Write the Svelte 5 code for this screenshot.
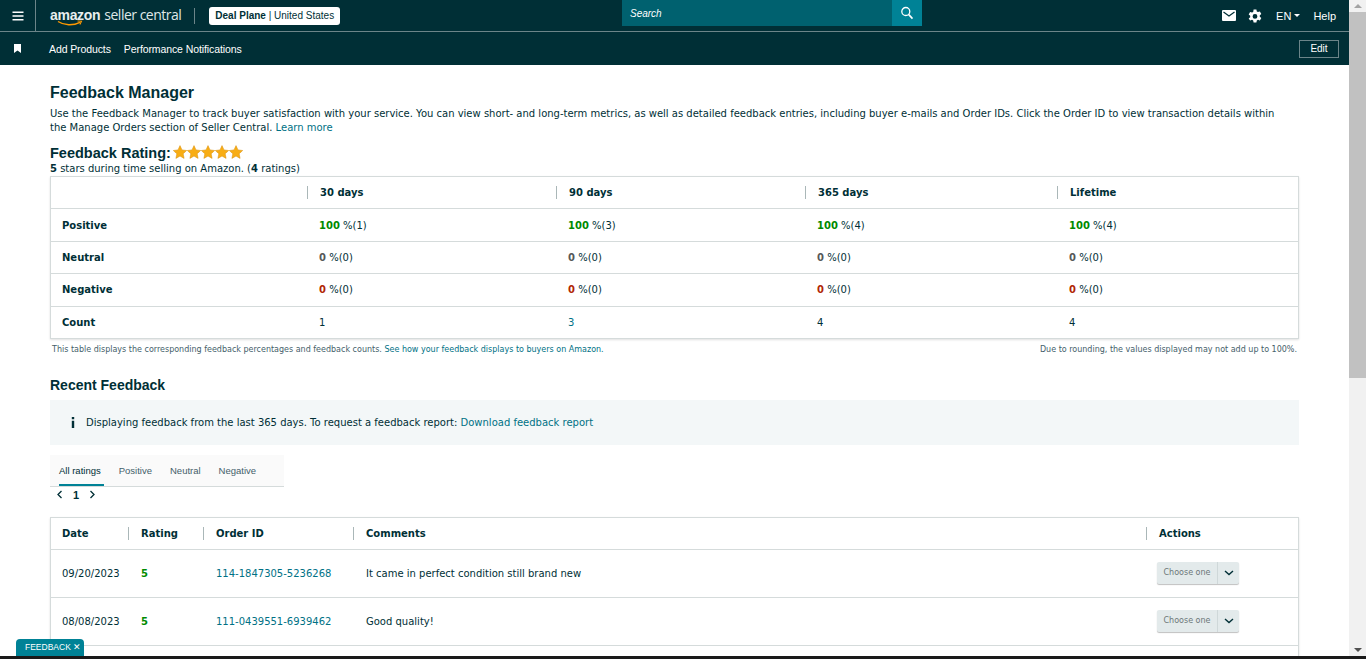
<script lang="ts">
    const summaryRows = [
        { label: "Positive", tone: "good", value: "100", counts: ["1", "3", "4", "4"] },
        { label: "Neutral", tone: "flat", value: "0", counts: ["0", "0", "0", "0"] },
        { label: "Negative", tone: "bad", value: "0", counts: ["0", "0", "0", "0"] },
    ];
    const periods = ["30 days", "90 days", "365 days", "Lifetime"];
    const totals = ["1", "3", "4", "4"];
    const tabs = ["All ratings", "Positive", "Neutral", "Negative"];
    const feedback = [
        { date: "09/20/2023", rating: 5, order: "114-1847305-5236268", comment: "It came in perfect condition still brand new" },
        { date: "08/08/2023", rating: 5, order: "111-0439551-6939462", comment: "Good quality!" },
        { date: "", rating: "", order: "", comment: "" },
    ];
</script>

<div class="screen">
    <div class="viewport">
        <div class="page">
            <header class="topbar">
                <div class="row-one">
                    <button class="burger" aria-label="Menu">
                        <svg width="14" height="10" viewBox="0 0 14 10"><path d="M1.5 1.2h11M1.5 5h11M1.5 8.8h11" stroke="#fff" stroke-width="1.4" /></svg>
                    </button>
                    <div class="brand">
                        <span class="amazon">amazon<svg class="smile" width="26" height="7" viewBox="0 0 26 7"><path d="M1 1.5c6 4 15 4.400 22 .8" fill="none" stroke="#f90" stroke-width="1.3" /><path d="M20.500 1l4 .2-1.600 3.300" fill="none" stroke="#f90" stroke-width="1.100" /></svg></span>
                        <span class="seller">seller central</span>
                    </div>
                    <span class="divider"></span>
                    <div class="account"><b>Deal Plane</b> <i>|</i> United States</div>
                    <div class="search">
                        <span class="search-text">Search</span>
                        <button class="search-btn" aria-label="Search">
                            <svg width="14" height="14" viewBox="0 0 14 14"><circle cx="5.800" cy="5.500" r="4" fill="none" stroke="#fff" stroke-width="1.300" /><path d="M8.800 8.600l3.700 4" stroke="#fff" stroke-width="1.600" /></svg>
                        </button>
                    </div>
                    <div class="tools">
                        <svg width="14" height="11" viewBox="0 0 14 11"><rect width="14" height="11" rx="1" fill="#fff" /><path d="M1.500 2l5.500 4 5.500-4" fill="none" stroke="#002f36" stroke-width="1.200" /></svg>
                        <svg class="gear" width="14" height="14" viewBox="0 0 14 14"><path fill="#fff" fill-rule="evenodd" d="M5.600.5h2.800l.4 1.900 1.200.7 1.900-.6 1.400 2.400-1.500 1.300v1.500l1.500 1.300-1.400 2.400-1.900-.6-1.200.7-.4 1.900H5.600l-.4-1.900-1.200-.7-1.900.6L.7 9.500l1.500-1.300V6.700L.7 5.400l1.400-2.400 1.900.6 1.200-.7zM7 5a2.400 2.400 0 1 0 0 4.800A2.400 2.400 0 0 0 7 5z" /></svg>
                        <span class="lang">EN<span class="caret"></span></span>
                        <span class="help">Help</span>
                    </div>
                </div>
                <div class="row-two">
                    <svg class="bookmark" width="7" height="9" viewBox="0 0 7 9"><path d="M0 0h7v9L3.500 6.500 0 9z" fill="#fff" /></svg>
                    <a href="#add">Add Products</a>
                    <a href="#perf">Performance Notifications</a>
                    <button class="edit">Edit</button>
                </div>
            </header>

            <main class="content">
                <h1>Feedback Manager</h1>
                <p class="intro">
                    Use the Feedback Manager to track buyer satisfaction with your service. You can view short- and long-term metrics, as well as detailed feedback entries, including buyer e-mails and Order IDs. Click the Order ID to view transaction details within the Manage Orders section of Seller Central. <a href="#more">Learn more</a>
                </p>

                <div class="rating-head">
                    <h2>Feedback Rating:</h2>
                    <div class="stars">
                        {#each [0, 1, 2, 3, 4] as s (s)}
                            <svg width="14" height="14" viewBox="0 0 14 14"><path d="M7 .6l2 4.300 4.700.6-3.500 3.200.9 4.700L7 11.100l-4.100 2.300.9-4.700L.3 5.500 5 4.900z" fill="#f8ad14" stroke="#d98f0a" stroke-width=".5" /></svg>
                        {/each}
                    </div>
                </div>
                <p class="sub"><b>5</b> stars during time selling on Amazon. (<b>4</b> ratings)</p>

                <table class="card summary">
                    <thead>
                        <tr>
                            <th class="first"></th>
                            {#each periods as p (p)}
                                <th><span class="sep">{p}</span></th>
                            {/each}
                        </tr>
                    </thead>
                    <tbody>
                        {#each summaryRows as row (row.label)}
                            <tr>
                                <th class="first">{row.label}</th>
                                {#each row.counts as c, i (i)}
                                    <td><b class={row.tone}>{row.value}</b> %({c})</td>
                                {/each}
                            </tr>
                        {/each}
                        <tr>
                            <th class="first">Count</th>
                            {#each totals as t, i (i)}
                                <td class:link={i === 1}>{t}</td>
                            {/each}
                        </tr>
                    </tbody>
                </table>
                <div class="notes">
                    <span>This table displays the corresponding feedback percentages and feedback counts. <a href="#see">See how your feedback displays to buyers on Amazon.</a></span>
                    <span>Due to rounding, the values displayed may not add up to 100%.</span>
                </div>

                <h2 class="recent">Recent Feedback</h2>
                <div class="banner">
                    <svg width="4" height="11" viewBox="0 0 4 11"><path d="M.8 0h2.400v2.300H.8zM.8 3.800h2.400V11H.8z" fill="#002f36" /></svg>
                    <span>Displaying feedback from the last 365 days. To request a feedback report: <a href="#dl">Download feedback report</a></span>
                </div>

                <div class="tabs">
                    {#each tabs as tab, i (tab)}
                        <span class="tab" class:active={i === 0}>{tab}</span>
                    {/each}
                </div>
                <div class="pager">
                    <svg width="7" height="9" viewBox="0 0 7 9"><path d="M5.500 1L2 4.500 5.500 8" fill="none" stroke="#002f36" stroke-width="1.300" /></svg>
                    <b>1</b>
                    <svg width="7" height="9" viewBox="0 0 7 9"><path d="M1.500 1L5 4.500 1.500 8" fill="none" stroke="#002f36" stroke-width="1.300" /></svg>
                </div>

                <table class="card list">
                    <thead>
                        <tr>
                            <th>Date</th>
                            <th><span class="sep">Rating</span></th>
                            <th><span class="sep">Order ID</span></th>
                            <th><span class="sep">Comments</span></th>
                            <th><span class="sep">Actions</span></th>
                        </tr>
                    </thead>
                    <tbody>
                        {#each feedback as f, i (i)}
                            <tr>
                                <td>{f.date}</td>
                                <td><b class="good">{f.rating}</b></td>
                                <td class="link">{f.order}</td>
                                <td>{f.comment}</td>
                                <td>
                                    <div class="choose">
                                        <span class="choose-label">Choose one</span>
                                        <span class="choose-arrow">
                                            <svg width="10" height="6" viewBox="0 0 10 6"><path d="M1 1l4 3.600L9 1" fill="none" stroke="#002f36" stroke-width="1.400" /></svg>
                                        </span>
                                    </div>
                                </td>
                            </tr>
                        {/each}
                    </tbody>
                </table>
            </main>
        </div>

        <div class="scrollbar" aria-hidden="true">
            <span class="arrow up"></span>
            <span class="thumb"></span>
            <span class="arrow down"></span>
        </div>

        <div class="feedback-tab">FEEDBACK <span>✕</span></div>
    </div>
    <div class="strip"></div>
</div>

<style>
    :global(body) {
        margin: 0;
        overflow: hidden;
        background: #fff;
    }

    .screen {
        height: 659px;
        display: flex;
        flex-direction: column;
        font-family: "DejaVu Sans", Verdana, sans-serif;
        font-size: 10px;
        color: #002f36;
    }

    .viewport {
        flex: 1;
        min-height: 0;
        display: flex;
        position: relative;
    }

    .page {
        flex: 1;
        min-width: 0;
        overflow: hidden;
    }

    a {
        color: #007185;
        text-decoration: none;
    }

    button {
        background: none;
        border: 0;
        padding: 0;
        color: inherit;
        font: inherit;
    }

    .topbar {
        background: #002f36;
        color: #fff;
        font-family: "Liberation Sans", Arial, sans-serif;
    }

    .row-one {
        height: 31px;
        display: flex;
        align-items: center;
        border-bottom: 1px solid #6c8589;
        position: relative;
    }

    .burger {
        width: 35px;
        height: 31px;
        display: flex;
        align-items: center;
        justify-content: center;
        border-right: 1px solid #6c8589;
        box-sizing: content-box;
    }

    .brand {
        margin-left: 14px;
        display: flex;
        align-items: flex-start;
        gap: 4px;
        height: 24px;
    }

    .amazon {
        font-size: 14px;
        font-weight: bold;
        letter-spacing: -0.3px;
        line-height: 22px;
        position: relative;
        color: #e8eeee;
    }

    .smile {
        position: absolute;
        left: 7px;
        top: 16px;
    }

    .seller {
        font-family: "Open Sans", sans-serif;
        font-size: 14px;
        letter-spacing: -0.5px;
        line-height: 22px;
        color: #dfe7e8;
    }

    .divider {
        width: 1px;
        height: 16px;
        background: #6c8589;
        margin-left: 13px;
    }

    .account {
        margin-left: 14px;
        background: #fff;
        color: #002f36;
        border-radius: 3px;
        font-size: 10px;
        line-height: 18px;
        height: 18px;
        padding: 0 6px;
        white-space: nowrap;
    }

    .account i {
        font-style: normal;
    }

    .search {
        position: absolute;
        left: 622px;
        top: 0;
        width: 300px;
        height: 26px;
        display: flex;
        background: #00616f;
        font-size: 10px;
    }

    .search-text {
        flex: 1;
        padding-left: 8px;
        line-height: 27px;
        font-style: italic;
    }

    .search-btn {
        width: 30px;
        height: 26px;
        background: #008296;
        display: flex;
        align-items: center;
        justify-content: center;
    }

    .tools {
        margin-left: auto;
        display: flex;
        align-items: center;
        padding-right: 13px;
        font-size: 11px;
    }

    .gear {
        margin-left: 12px;
    }

    .lang {
        margin-left: 14px;
        display: flex;
        align-items: center;
        gap: 3px;
    }

    .caret {
        width: 0;
        height: 0;
        border: 3px solid transparent;
        border-top: 3px solid #fff;
        border-bottom: 0;
    }

    .help {
        margin-left: 13px;
    }

    .row-two {
        height: 33px;
        display: flex;
        align-items: center;
        font-size: 10.5px;
        padding: 0 10px 0 14px;
    }

    .bookmark {
        margin-right: 28px;
        margin-top: -1px;
    }

    .row-two a {
        color: #fff;
        margin-right: 13px;
        letter-spacing: -0.1px;
    }

    .edit {
        margin-left: auto;
        width: 40px;
        height: 18px;
        border: 1px solid #6c8589;
        color: #fff;
        font-size: 10px;
        box-sizing: border-box;
    }

    .content {
        padding: 19px 50px 0;
    }

    h1, h2 {
        font-family: "Liberation Sans", Arial, sans-serif;
        font-weight: bold;
        margin: 0;
        color: #002f36;
    }

    h1 {
        font-size: 16px;
        line-height: 18px;
    }

    .intro {
        margin: 5px 0 0;
        line-height: 14px;
        width: 1240px;
    }

    .rating-head {
        display: flex;
        align-items: center;
        margin-top: 9px;
        height: 18px;
    }

    .rating-head h2 {
        font-size: 14.500px;
    }

    .stars {
        display: flex;
        margin-left: 2px;
        margin-top: -2px;
    }

    .sub {
        margin: 0;
        line-height: 13px;
    }

    .card {
        width: 1249px;
        border-collapse: collapse;
        table-layout: fixed;
        border: 1px solid #d5dbdb;
        box-shadow: 0 1px 2px rgba(0, 0, 0, 0.12);
    }

    .card th, .card td {
        border-top: 1px solid #d5dbdb;
        padding: 0;
        text-align: left;
        font-size: 10px;
        white-space: nowrap;
    }

    .card thead th {
        border-top: 0;
    }

    .sep {
        display: block;
        border-left: 1px solid #aab7b8;
        padding-left: 12px;
        line-height: 13px;
    }

    .summary {
        margin-top: 1px;
    }

    .summary tr {
        height: 32.400px;
    }

    .summary .first {
        width: 245px;
        padding-left: 11px;
    }

    .summary td {
        padding-left: 12px;
    }

    .summary th:nth-child(2), .summary td:nth-child(2),
    .summary th:nth-child(3), .summary td:nth-child(3) {
        width: 249px;
    }

    .summary th:nth-child(4), .summary td:nth-child(4) {
        width: 252px;
    }

    .good { color: #008a00; }
    .flat { color: #565959; }
    .bad { color: #b12704; }
    .link { color: #007185; }

    .notes {
        display: flex;
        justify-content: space-between;
        font-size: 8px;
        line-height: 10px;
        margin-top: 6px;
        padding: 0 2px;
        color: #44606a;
    }

    .recent {
        font-size: 14px;
        line-height: 16px;
        margin-top: 22px;
    }

    .banner {
        margin-top: 7px;
        height: 45px;
        background: #f3f7f8;
        display: flex;
        align-items: center;
        gap: 11px;
        padding-left: 21px;
    }

    .tabs {
        margin-top: 10px;
        width: 234px;
        height: 32px;
        box-sizing: border-box;
        background: #fafafa;
        border-bottom: 1px solid #d5dbdb;
        display: flex;
        padding-left: 9px;
        gap: 18px;
        font-family: "Liberation Sans", Arial, sans-serif;
        font-size: 9.500px;
        color: #44606a;
    }

    .tab {
        line-height: 31px;
        height: 31px;
        box-sizing: border-box;
    }

    .tab.active {
        color: #002f36;
        border-bottom: 2px solid #008296;
        padding-right: 3px;
        margin-right: -3px;
    }

    .pager {
        display: flex;
        align-items: center;
        gap: 10px;
        height: 16px;
        padding-left: 6px;
        font-family: "Liberation Sans", Arial, sans-serif;
        font-size: 11px;
    }

    .list {
        margin-top: 14px;
    }

    .list thead tr {
        height: 32px;
    }

    .list tbody tr {
        height: 48px;
    }

    .list th:nth-child(1), .list td:nth-child(1) {
        width: 66px;
        padding-left: 11px;
    }

    .list th:nth-child(2), .list td:nth-child(2) {
        width: 75px;
    }

    .list td:nth-child(2) {
        padding-left: 13px;
        box-sizing: border-box;
    }

    .list th:nth-child(3), .list td:nth-child(3) {
        width: 150px;
    }

    .list td:nth-child(3) {
        padding-left: 13px;
    }

    .list th:nth-child(4), .list td:nth-child(4) {
        width: 793px;
    }

    .list td:nth-child(4) {
        padding-left: 13px;
    }

    .list td:nth-child(5) {
        padding-left: 11px;
    }

    .choose {
        display: flex;
        width: 82px;
        height: 22px;
        background: #e3eaeb;
        border-radius: 2px;
        box-shadow: 0 1px 1px rgba(0, 0, 0, 0.25);
        font-size: 8px;
        color: #6c7778;
        align-items: stretch;
    }

    .choose-label {
        flex: 1;
        text-align: center;
        line-height: 22px;
    }

    .choose-arrow {
        width: 21px;
        border-left: 1px solid #cfd8d9;
        display: flex;
        align-items: center;
        justify-content: center;
    }

    .scrollbar {
        width: 17px;
        background: #f1f1f1;
        position: relative;
        display: flex;
        flex-direction: column;
        align-items: center;
    }

    .arrow {
        width: 0;
        height: 0;
        border: 4px solid transparent;
        margin: 4px 0;
    }

    .arrow.up {
        border-bottom: 4px solid #a3a3a3;
        border-top: 0;
    }

    .arrow.down {
        border-top: 4px solid #505050;
        border-bottom: 0;
    }

    .thumb {
        width: 100%;
        flex: 0 0 366px;
        background: #c1c1c1;
        margin-bottom: auto;
    }

    .feedback-tab {
        position: absolute;
        left: 16px;
        bottom: 0;
        width: 68px;
        height: 17px;
        background: #008296;
        color: #fff;
        border-radius: 4px 4px 0 0;
        font-family: "Liberation Sans", Arial, sans-serif;
        font-size: 8.500px;
        line-height: 17px;
        padding-left: 9px;
        box-sizing: border-box;
        white-space: nowrap;
    }

    .strip {
        height: 3px;
        background: #1a1a1a;
    }
</style>
